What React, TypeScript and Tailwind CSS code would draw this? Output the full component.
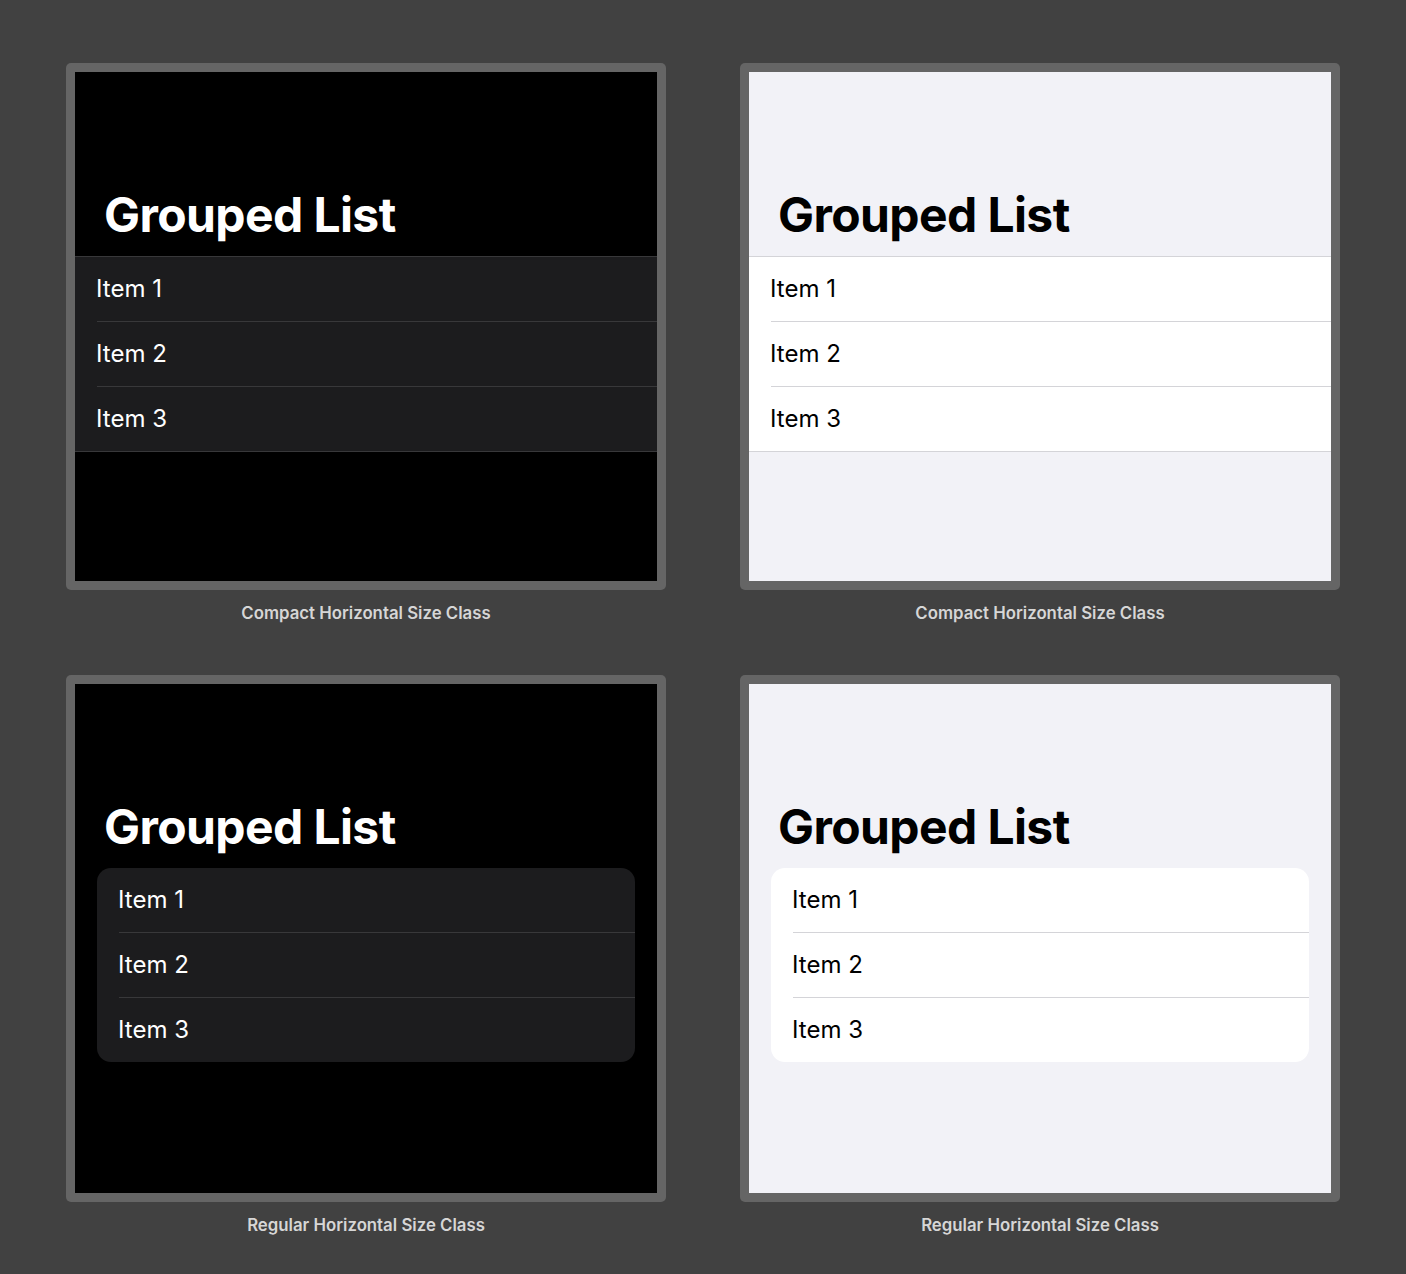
import React from 'react';

type Mode = 'dark' | 'light';
type Style = 'compact' | 'regular';

const items = ['Item 1', 'Item 2', 'Item 3'];

const Rows = ({ mode }: { mode: Mode }) => {
  const sep = mode === 'dark' ? 'border-[#38383a]' : 'border-[#d4d4d8]';
  return (
    <>
      {items.map((item, i) => (
        <div key={item} className="h-[65px] pl-[22px] last:h-[64px]">
          <div
            className={`flex h-full items-center ${i < items.length - 1 ? `border-b ${sep}` : ''}`}
          >
            <span
              className={`-ml-[1px] text-[24px] leading-none ${mode === 'dark' ? 'text-white' : 'text-black'}`}
            >
              {item}
            </span>
          </div>
        </div>
      ))}
    </>
  );
};

const Panel = ({ mode, style }: { mode: Mode; style: Style }) => {
  const dark = mode === 'dark';
  const caption = style === 'compact' ? 'Compact Horizontal Size Class' : 'Regular Horizontal Size Class';

  return (
    <div className="flex flex-col items-center">
      <div className="w-[600px] rounded-[5px] bg-[#656565] p-[9px]">
        <div className={`h-[509px] overflow-hidden ${dark ? 'bg-black' : 'bg-[#f2f2f7]'}`}>
          <div className="flex h-[184px] items-end pb-[17px] pl-[29px]">
            <h1
              className={`text-[48px] font-bold leading-none tracking-[-0.6px] ${dark ? 'text-white' : 'text-black'}`}
            >
              Grouped List
            </h1>
          </div>
          {style === 'compact' ? (
            <div
              className={`border-y ${dark ? 'border-[#38383a] bg-[#1c1c1e]' : 'border-[#d4d4d8] bg-white'}`}
            >
              <Rows mode={mode} />
            </div>
          ) : (
            <div className="px-[22px]">
              <div className={`overflow-hidden rounded-[14px] ${dark ? 'bg-[#1c1c1e]' : 'bg-white'}`}>
                <Rows mode={mode} />
              </div>
            </div>
          )}
        </div>
      </div>
      <p className="mt-[13px] text-[16.8px] font-semibold leading-[20px] text-[#d6d6d6]">{caption}</p>
    </div>
  );
};

export default function App() {
  return (
    <div
      className="min-h-[1274px] w-full bg-[#414141] pt-[63px] pl-[66px]"
      style={{ fontFamily: 'Inter, "Noto Sans", sans-serif' }}
    >
      <div className="grid w-[1274px] grid-cols-[600px_600px] gap-x-[74px] gap-y-[52px]">
        <Panel mode="dark" style="compact" />
        <Panel mode="light" style="compact" />
        <Panel mode="dark" style="regular" />
        <Panel mode="light" style="regular" />
      </div>
    </div>
  );
}
